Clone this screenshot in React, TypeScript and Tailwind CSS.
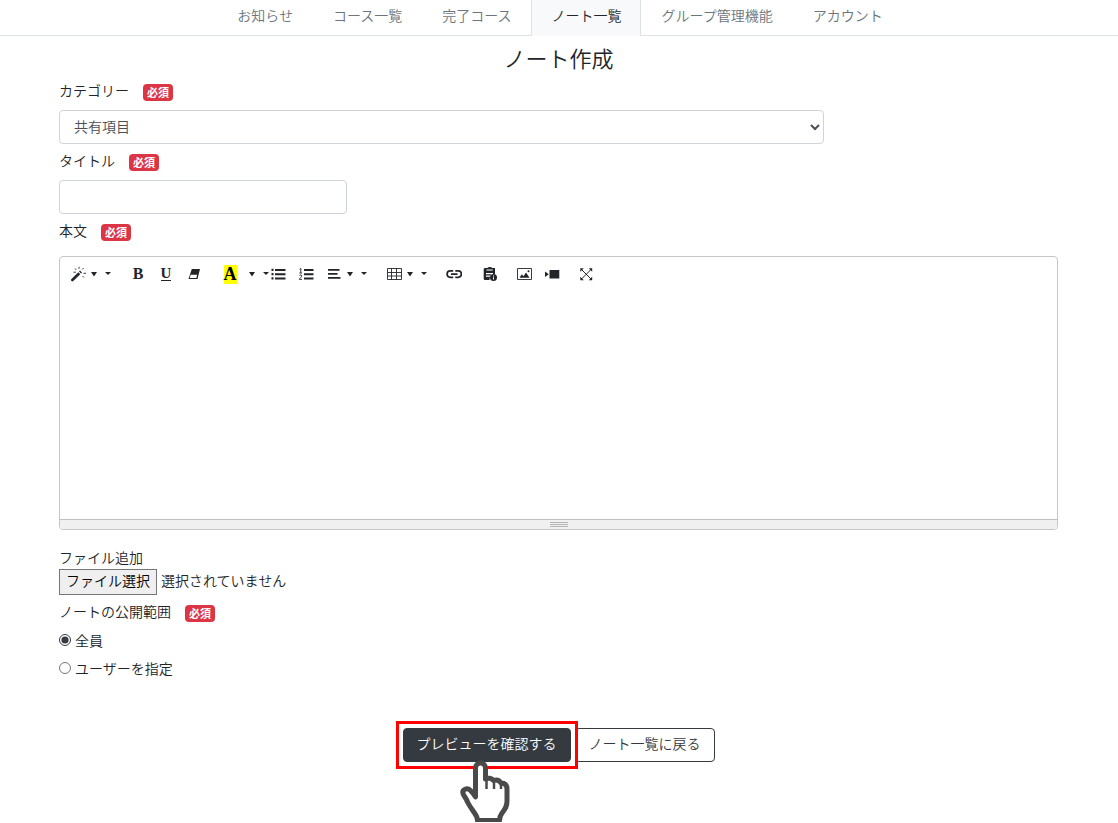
import type { ReactNode } from 'react'

type Tab = { label: string; active?: boolean }

const tabs: Tab[] = [
  { label: 'お知らせ' },
  { label: 'コース一覧' },
  { label: '完了コース' },
  { label: 'ノート一覧', active: true },
  { label: 'グループ管理機能' },
  { label: 'アカウント' },
]

function RequiredBadge() {
  return (
    <span className="mt-1 ml-3.5 inline-flex h-[17px] items-center rounded bg-[#dc3545] px-1 text-[11px] leading-none font-bold text-white">
      必須
    </span>
  )
}

function FieldLabel({ htmlFor, children }: { htmlFor: string; children: ReactNode }) {
  return (
    <div className="flex h-[22px] items-center pb-0.5">
      <label htmlFor={htmlFor}>{children}</label>
      <RequiredBadge />
    </div>
  )
}

function Caret() {
  return (
    <svg width="8" height="16" viewBox="0 0 8 16" fill="currentColor" aria-hidden="true">
      <path d="M1 6h6L4 10.500z" />
    </svg>
  )
}

function ToggleCaret() {
  return (
    <svg width="8" height="16" viewBox="0 0 8 16" fill="currentColor" aria-hidden="true">
      <path d="M1 6h6L4 9z" />
    </svg>
  )
}

function Icon({ children }: { children: ReactNode }) {
  return (
    <svg width="16" height="16" viewBox="0 0 16 16" fill="currentColor" aria-hidden="true">
      {children}
    </svg>
  )
}

function ToolButton({ label, className = '', children }: { label: string; className?: string; children: ReactNode }) {
  return (
    <button type="button" aria-label={label} className={`flex h-7 shrink-0 items-center justify-center ${className}`}>
      {children}
    </button>
  )
}

function Toolbar() {
  return (
    <div className="flex h-[34px] items-center pl-2.5 text-[#212529]">
      <ToolButton label="スタイル" className="gap-1">
        <Icon>
          <path d="M1 13.400 8.300 6.300l2 2L3 15.300c-.8.600-2.600-1-2-1.900z" />
          <path d="m9 5.600 1-1 2 2-1 1z" />
          <path d="M5 2.500 6.300 4M9 .8v2M13.700 2l-1.500 1.500M13.500 7.300H16M12.500 10l1.500 1.500M3.500 6.200H6" stroke="currentColor" strokeWidth=".9" />
        </Icon>
        <Caret />
      </ToolButton>
      <ToolButton label="スタイルの選択" className="ml-1.5">
        <ToggleCaret />
      </ToolButton>

      <ToolButton label="太字" className="ml-3 w-7 font-[Liberation_Serif,serif] text-base font-bold">
        B
      </ToolButton>
      <ToolButton label="下線" className="w-7">
        <span className="border-b border-current font-[Liberation_Serif,serif] text-[15px] leading-[13px] font-bold">U</span>
      </ToolButton>
      <ToolButton label="書式をクリア" className="w-7">
        <Icon>
          <path d="M5.800 3h8.200L11.500 13H2.500z" />
          <path d="M4.600 8.700h6.600L10.300 12H3.800z" fill="#fff" />
        </Icon>
      </ToolButton>

      <ToolButton label="文字色" className="ml-2 w-7">
        <span className="bg-[#ffff00] font-[Liberation_Serif,serif] text-lg leading-[19px] font-bold text-black">A</span>
      </ToolButton>
      <ToolButton label="その他の色" className="ml-1">
        <Caret />
      </ToolButton>
      <ToolButton label="色の選択" className="ml-1.5">
        <ToggleCaret />
      </ToolButton>

      <ToolButton label="箇条書き">
        <Icon>
          <path d="M1.500 2.700h2V5h-2zM1.500 7h2v2.200h-2zM1.500 11.300h2v2.200h-2zM5 3h10.500v2H5zM5 7.200h10.500v2H5zM5 11.400h10.500v2H5z" />
        </Icon>
      </ToolButton>
      <ToolButton label="番号付きリスト" className="ml-3">
        <Icon>
          <path d="M6 3h9.500v2H6zM6 7.200h9.500v2H6zM6 11.400h9.500v2H6z" />
          <path d="M1.500 3.300 2.800 2.400V7M1.500 9.800c.2-1.200 2.400-1.200 2.200.3-.1 1-2.100 2-2.300 3.300H4M1.400 7H4" fill="none" stroke="currentColor" strokeWidth=".9" />
        </Icon>
      </ToolButton>
      <ToolButton label="段落" className="ml-3 gap-1">
        <Icon>
          <path d="M2 3h11.500v1.700H2zM2 7h9.500v1.700H2zM2 11h12.500v1.700H2z" />
        </Icon>
        <Caret />
      </ToolButton>
      <ToolButton label="段落の選択" className="ml-1.5">
        <ToggleCaret />
      </ToolButton>

      <ToolButton label="表" className="ml-[18px] gap-1">
        <Icon>
          <path d="M1.500 2.500h14v11h-14zM1.500 6.500h14M1.500 10h14M5.500 2.500v11M10.500 2.500v11" fill="none" stroke="currentColor" strokeWidth=".9" />
        </Icon>
        <Caret />
      </ToolButton>
      <ToolButton label="表の選択" className="ml-1.5">
        <ToggleCaret />
      </ToolButton>

      <ToolButton label="リンク" className="ml-[18px]">
        <Icon>
          <path d="M7.200 11.300H4.300a3.200 3.200 0 0 1 0-6.400h2.900M9.300 4.900h2.900a3.200 3.200 0 0 1 0 6.400H9.300M5 8.100h6.500" fill="none" stroke="currentColor" strokeWidth="1.700" />
        </Icon>
      </ToolButton>
      <ToolButton label="テキスト貼り付け" className="ml-5">
        <Icon>
          <path d="M3 2h2.300a2.700 1.800 0 0 1 5 0H13v6h-2V7H4v1.200h5v1.300H4v1.300h4l-.5 3.200H3a1.300 1.300 0 0 1-1.300-1.300V3.300A1.300 1.300 0 0 1 3 2z" />
          <path d="M4.500 3.500h6.300v1H4.500z" fill="#fff" />
          <circle cx="11.500" cy="11.500" r="3.500" />
          <path d="M11 9.500h1v1h-1zM11 11.200h1v2.300h-1z" fill="#fff" />
        </Icon>
      </ToolButton>
      <ToolButton label="画像" className="ml-[18px]">
        <Icon>
          <path d="M1.500 2.500h14v11h-14z" fill="none" stroke="currentColor" strokeWidth=".9" />
          <path d="m3.500 11.800 2.300-3.600 1.700 2L10 6.600l3.500 5.200z" />
          <circle cx="12.500" cy="5.300" r="1" />
        </Icon>
      </ToolButton>
      <ToolButton label="動画" className="ml-3">
        <Icon>
          <path d="M5.500 4h9.800v8.500H5.500zM1 5.500l3.800 2.800L1 11z" />
        </Icon>
      </ToolButton>
      <ToolButton label="フルスクリーン" className="ml-[18px]">
        <Icon>
          <path d="m3.500 3.500 9.500 9.500M13 3.500 3.500 13" stroke="currentColor" strokeWidth="1" />
          <path d="M2.300 2.300h3.500L2.300 5.800zM14.200 2.300v3.500l-3.500-3.500zM2.300 14.200v-3.500l3.500 3.500zM14.200 14.200h-3.500l3.500-3.500z" />
        </Icon>
      </ToolButton>
    </div>
  )
}

function HandPointer() {
  return (
    <svg
      className="pointer-events-none absolute top-8 left-14"
      width="52"
      height="64"
      viewBox="0 0 52 64"
      fill="none"
      stroke="#4a4a4a"
      strokeWidth="5"
      strokeLinejoin="round"
      aria-hidden="true"
    >
      <path
        d="M16.500 37V8.500C16.500 1 26.500 1 26.500 8.500V19c2-1.500 6-1 8 1.500 3-1 6 0 7.500 2.500 4 0 6 2 6 6v12c0 6-2 8-5 12-1.500 2-2.500 4.500-2.500 7.500H18.500c0-3-.5-4-3-7.500C12 48 10.500 46 8.500 42 7 38 5 36.500 4 33.500c-1-4 4-6.500 7.500-3 2 2 3.500 3.500 5 6.500z"
        fill="#fff"
      />
      <path d="M27.500 18v11M35 21v8M42 23v6" strokeWidth="2.500" />
    </svg>
  )
}

export default function App() {
  return (
    <div className="bg-white font-['Noto_Sans_CJK_JP',sans-serif] text-sm leading-[22px] font-[350] text-[#212529]">
      <nav className="flex h-9 justify-center border-b border-[#dee2e6]">
        {tabs.map(tab => (
          <a
            key={tab.label}
            href="#"
            aria-current={tab.active ? 'page' : undefined}
            className={`border-x pt-1 pr-[18px] pl-5 ${
              tab.active ? '-mb-px border-[#dee2e6] bg-[#f8f9fa] text-[#212529]' : 'border-transparent text-[#6c757d]'
            }`}
          >
            {tab.label}
          </a>
        ))}
      </nav>

      <main className="pt-2 pr-[60px] pl-[59px]">
        <h1 className="mb-2.5 text-center text-[22px] leading-[26px]">ノート作成</h1>

        <form>
          <div className="mb-1.5">
            <FieldLabel htmlFor="category">カテゴリー</FieldLabel>
            <select
              id="category"
              className="mt-2 block h-[34px] w-[765px] max-w-full rounded border border-[#ced4da] bg-white pb-[3px] pl-2.5 text-[#495057]"
            >
              <option>共有項目</option>
            </select>
          </div>

          <div className="mb-1.5">
            <FieldLabel htmlFor="title">タイトル</FieldLabel>
            <input
              id="title"
              type="text"
              className="mt-2 block h-[34px] w-72 rounded border border-[#ced4da] bg-white px-3 text-[#495057]"
            />
          </div>

          <div className="mb-4">
            <FieldLabel htmlFor="body">本文</FieldLabel>
            <div className="mt-3.5 overflow-hidden rounded border border-[#c6c6c6]">
              <Toolbar />
              <textarea id="body" className="block h-[228px] w-full resize-none p-2.5 outline-none" />
              <div className="flex h-[10px] flex-col items-center gap-px border-t border-[#c0c0c0] bg-[#f0f0f0] pt-0.5">
                <div className="h-px w-[18px] bg-[#b5b5b5]" />
                <div className="h-px w-[18px] bg-[#b5b5b5]" />
                <div className="h-px w-[18px] bg-[#b5b5b5]" />
              </div>
            </div>
          </div>

          <div className="mb-1.5">
            <p className="pb-px">ファイル追加</p>
            <div className="flex items-center gap-1">
              <label
                htmlFor="file"
                className="h-[26px] border border-[#767676] bg-[#efefef] px-1.5 leading-5 text-black"
              >
                ファイル選択
              </label>
              <input id="file" type="file" className="sr-only" />
              <span className="-mt-1">選択されていません</span>
            </div>
          </div>

          <fieldset>
            <legend className="flex h-[22px] items-center pb-0.5">
              ノートの公開範囲
              <RequiredBadge />
            </legend>
            <label className="mt-1.5 flex items-center gap-1">
              <input type="radio" name="scope" defaultChecked className="size-3 accent-[#343a40]" />
              全員
            </label>
            <label className="mt-1.5 flex items-center gap-1">
              <input type="radio" name="scope" className="size-3 accent-[#343a40]" />
              ユーザーを指定
            </label>
          </fieldset>

          <div className="mt-[49px] mb-15 flex justify-center gap-1">
            <div className="relative">
              <button
                type="button"
                className="h-[34px] rounded border border-[#343a40] bg-[#343a40] px-[13px] pb-1 text-white"
              >
                プレビューを確認する
              </button>
              <div className="pointer-events-none absolute -inset-[7px] z-10 border-3 border-[#ff0000]" />
              <div className="pointer-events-none absolute inset-0 z-20">
                <HandPointer />
              </div>
            </div>
            <button type="button" className="h-[34px] rounded border border-[#343a40] px-[13px] pb-1 text-[#343a40]">
              ノート一覧に戻る
            </button>
          </div>
        </form>
      </main>
    </div>
  )
}
